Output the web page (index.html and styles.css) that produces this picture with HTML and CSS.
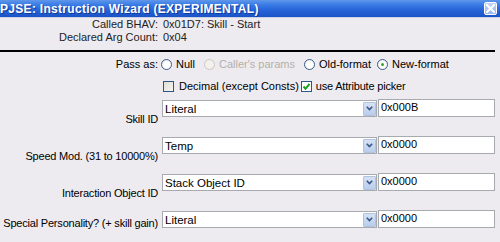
FILE: index.html
```html
<!DOCTYPE html>
<html>
<head>
<meta charset="utf-8">
<link rel="stylesheet" href="styles.css">
</head>
<body>
<div class="window">
  <div class="titlebar">
    <span class="title">PJSE: Instruction Wizard (EXPERIMENTAL)</span>
    <span class="close"><svg width="9" height="9" viewBox="0 0 9 9"><path d="M1 1L8 8M8 1L1 8" stroke="#fff" stroke-width="2" stroke-linecap="square"/></svg></span>
  </div>
  <div class="info">
    <div class="info-label">Called BHAV:</div><div class="info-value">0x01D7: Skill - Start</div>
    <div class="info-label">Declared Arg Count:</div><div class="info-value">0x04</div>
  </div>
  <div class="sep"></div>
  <div class="opts">
    <div class="opt-label">Pass as:</div>
    <div class="radios">
      <span class="radio-item"><span class="radio"></span>Null</span>
      <span class="radio-item disabled"><span class="radio"></span>Caller's params</span>
      <span class="radio-item"><span class="radio"></span>Old-format</span>
      <span class="radio-item"><span class="radio checked"></span>New-format</span>
    </div>
    <div></div>
    <div class="checks">
      <span class="check-item"><span class="check"></span>Decimal (except Consts)</span>
      <span class="check-item"><span class="check checked"><svg width="9" height="9" viewBox="0 0 9 9"><path d="M1.5 4.5L3.5 6.8L7.5 2" fill="none" stroke="#21a121" stroke-width="2"/></svg></span>use Attribute picker</span>
    </div>
  </div>
  <div class="fields">
    <div class="field">
      <div class="field-label">Skill ID</div>
      <div class="combo"><span class="combo-text">Literal</span><span class="combo-btn"><svg width="7" height="5" viewBox="0 0 7 5"><path d="M0.8 0.8L3.5 3.6L6.2 0.8" fill="none" stroke="#3b5585" stroke-width="1.6"/></svg></span></div>
      <div class="hex">0x000B</div>
    </div>
    <div class="field">
      <div class="field-label">Speed Mod. (31 to 10000%)</div>
      <div class="combo"><span class="combo-text">Temp</span><span class="combo-btn"><svg width="7" height="5" viewBox="0 0 7 5"><path d="M0.8 0.8L3.5 3.6L6.2 0.8" fill="none" stroke="#3b5585" stroke-width="1.6"/></svg></span></div>
      <div class="hex">0x0000</div>
    </div>
    <div class="field">
      <div class="field-label">Interaction Object ID</div>
      <div class="combo"><span class="combo-text">Stack Object ID</span><span class="combo-btn"><svg width="7" height="5" viewBox="0 0 7 5"><path d="M0.8 0.8L3.5 3.6L6.2 0.8" fill="none" stroke="#3b5585" stroke-width="1.6"/></svg></span></div>
      <div class="hex">0x0000</div>
    </div>
    <div class="field last">
      <div class="field-label">Special Personality? (+ skill gain)</div>
      <div class="combo"><span class="combo-text">Literal</span><span class="combo-btn"><svg width="7" height="5" viewBox="0 0 7 5"><path d="M0.8 0.8L3.5 3.6L6.2 0.8" fill="none" stroke="#3b5585" stroke-width="1.6"/></svg></span></div>
      <div class="hex">0x0000</div>
    </div>
  </div>
</div>
</body>
</html>
```
FILE: styles.css
```css
html, body {
  margin: 0;
  padding: 0;
  background: #eeebf0;
}
.window {
  width: 500px;
  height: 242px;
  overflow: hidden;
  font-family: "Liberation Sans", Arial, sans-serif;
  font-size: 11px;
  color: #000;
  background: #eeebf0;
}
.titlebar {
  height: 17px;
  display: flex;
  align-items: center;
  justify-content: space-between;
  background: linear-gradient(#5f97ea 0%, #3d7ee6 25%, #2563d8 60%, #1c53c6 100%);
  border-bottom: 1px solid #c9d3e6;
  padding: 0 3px 0 0;
}
.title {
  color: #fff;
  font-weight: bold;
  font-size: 12px;
  letter-spacing: 0.3px;
  text-shadow: 1px 1px 0 #0f3a99;
}
.close {
  width: 13px;
  height: 13px;
  box-sizing: border-box;
  border: 1px solid #fff;
  border-radius: 2px;
  background: linear-gradient(#c2d4f5, #9ab8ee);
  display: flex;
  align-items: center;
  justify-content: center;
}
.info {
  display: grid;
  grid-template-columns: 158px auto;
  column-gap: 5px;
  line-height: 13px;
  color: #222;
}
.info-label {
  text-align: right;
}
.sep {
  height: 2px;
  width: 495px;
  background: #000;
  margin-top: 6px;
}
.opts {
  display: grid;
  grid-template-columns: 158px auto;
  column-gap: 3px;
  row-gap: 8px;
  margin-top: 5px;
  line-height: 14px;
}
.opt-label {
  text-align: right;
}
.radios, .checks {
  display: flex;
  align-items: center;
  gap: 9px;
}
.radio-item, .check-item {
  display: flex;
  align-items: center;
  gap: 4px;
}
.radio-item:last-child {
  margin-left: -3px;
}
.radio-item.disabled {
  color: #b3b0a8;
}
.radio {
  width: 11px;
  height: 11px;
  box-sizing: border-box;
  border-radius: 50%;
  border: 1px solid #3a5b8a;
  background: radial-gradient(circle at 60% 60%, #fff 40%, #e4e2dc 100%);
  position: relative;
}
.radio-item.disabled .radio {
  border-color: #cac8bf;
  background: #f2f1ee;
}
.radio.checked::after {
  content: "";
  position: absolute;
  left: 3px;
  top: 3px;
  width: 3px;
  height: 3px;
  border-radius: 50%;
  background: #2fa52f;
}
.checks {
  gap: 2px;
}
.check-item {
  gap: 5px;
}
.check-item:first-child {
  margin-left: 2px;
}
.check-item:last-child {
  gap: 4px;
  letter-spacing: -0.2px;
}
.check {
  width: 11px;
  height: 11px;
  box-sizing: border-box;
  border: 1px solid #2b5785;
  background: linear-gradient(135deg, #dedcd4, #f7f6f2);
  display: flex;
  align-items: center;
  justify-content: center;
}
.check.checked {
  background: #fff;
}
.fields {
  margin-top: 7px;
}
.field {
  display: grid;
  grid-template-columns: 158px 215px 117px;
  column-gap: 0;
  height: 37px;
  align-items: start;
}
.field.last {
  height: 30px;
}
.field-label {
  text-align: right;
  padding-right: 4px;
  width: 162px;
  box-sizing: border-box;
  margin-top: 12px;
  line-height: 14px;
  white-space: nowrap;
  letter-spacing: -0.2px;
  grid-column: 1;
  justify-self: start;
  margin-right: -4px;
}
.field.last .field-label {
  margin-top: 5px;
}
.combo {
  grid-column: 2;
  margin-left: 4px;
  height: 17px;
  box-sizing: border-box;
  border: 1px solid #a7abb0;
  background: #fff;
  display: flex;
  align-items: center;
  justify-content: space-between;
  padding-left: 2px;
  width: 215px;
  font-size: 11.5px;
}
.combo-text {
  line-height: 14px;
}
.combo-btn {
  width: 13px;
  height: 14px;
  box-sizing: border-box;
  border: 1px solid #b2c3dd;
  background: linear-gradient(#d5e2f5, #b9cdec);
  display: flex;
  align-items: center;
  justify-content: center;
  border-radius: 1px;
}
.hex {
  grid-column: 3;
  margin-left: 5px;
  height: 18px;
  margin-top: -1px;
  box-sizing: border-box;
  border: 1px solid #a7abb0;
  background: #fff;
  padding-left: 2px;
  line-height: 15px;
  width: 117px;
}
```
